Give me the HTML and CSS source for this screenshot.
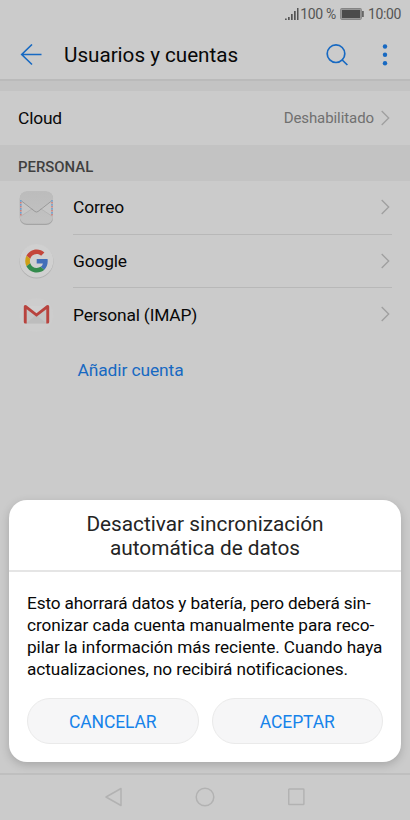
FILE: index.html
```html
<!DOCTYPE html>
<html lang="es">
<head>
<meta charset="utf-8">
<title>Usuarios y cuentas</title>
<link rel="stylesheet" href="styles.css">
</head>
<body>
<div class="screen">
  <div class="status">
    <svg class="signal" width="14" height="13" viewBox="0 0 14 13" fill="#555"><path d="M0 10.5h1.7V12H0zM3 9h1.7v3H3zM6 6h1.7v6H6zM9 3h1.7v9H9zM12 0h1.5v12H12z"/></svg>
    <span class="percent">100 %</span>
    <svg class="battery" width="24" height="12" viewBox="0 0 24 12"><rect x=".7" y=".7" width="20.6" height="10.6" rx="1.2" fill="none" stroke="#858585" stroke-width="1.2"/><rect x="1.7" y="1.7" width="18.6" height="8.6" fill="#4b4b4b"/><rect x="22" y="3" width="1.8" height="6" fill="#666"/></svg>
    <span class="clock">10:00</span>
  </div>
  <header class="appbar">
    <svg class="back" width="22" height="22" viewBox="0 0 22 22" fill="none" stroke="#1769c2" stroke-width="1.6"><path d="M21.5 10.5H1.8M12 .5L1.7 10.5l10.3 10"/></svg>
    <h1>Usuarios y cuentas</h1>
    <svg class="search" width="22" height="22" viewBox="0 0 22 22" fill="none" stroke="#1769c2" stroke-width="1.7"><circle cx="10" cy="9.7" r="8.8"/><path d="M16.2 16l5.2 5"/></svg>
    <svg class="more" width="6" height="22" viewBox="0 0 6 22" fill="#1769c2"><circle cx="3" cy="2.5" r="2.2"/><circle cx="3" cy="10.8" r="2.2"/><circle cx="3" cy="19.2" r="2.2"/></svg>
  </header>
  <main>
    <div class="row cloud"><span class="label">Cloud</span><span class="state">Deshabilitado</span>
      <svg class="chevron" width="9" height="16" viewBox="0 0 9 16"><path d="M.7 1l7 7-7 7"/></svg></div>
    <h2>PERSONAL</h2>
    <div class="row account">
      <svg class="icon" width="36" height="36" viewBox="0 0 36 36">
        <defs><linearGradient id="mail" x2="0" y2="1"><stop stop-color="#bcbcbc"/><stop offset="1" stop-color="#c2c2c2"/></linearGradient></defs>
        <rect x="1.8" y="1.7" width="33.2" height="33.3" rx="7" fill="#a4a4a4"/><rect x="1.8" y="1.2" width="33.2" height="32.6" rx="7" fill="url(#mail)"/>
        <path d="M2.5 10l12 8.5L2.5 26zM34.5 10l-12 8.5L34.5 26z" fill="#c6c6c6"/>
        <path d="M2.5 26.5l12-8M34.5 26.5l-12-8" fill="none" stroke="#b0b0b0" stroke-width=".7"/>
        <path d="M3.5 11L17 21.5q1.5 1 3 0L33.5 11" fill="none" stroke="#999" stroke-width="1"/>
        <path d="M2.8 10v16M34 10v16" stroke="#6f9fcb" stroke-width="1.6" stroke-dasharray="1.7 2.3"/>
        <path d="M2.8 12v14M34 12v14" stroke="#cc7d7a" stroke-width="1.6" stroke-dasharray="1.4 2.6"/>
      </svg>
      <span class="label">Correo</span><svg class="chevron" width="9" height="16" viewBox="0 0 9 16"><path d="M.7 1l7 7-7 7"/></svg></div>
    <div class="row account">
      <svg class="icon" width="36" height="36" viewBox="0 0 36 36">
        <circle cx="18.5" cy="18.6" r="17" fill="#b2b2b2"/><circle cx="18.5" cy="17.7" r="16.8" fill="#d0d0d0"/>
        <g transform="translate(7.2 6.5) scale(.479)">
          <path fill="#c4463b" d="M24 9.5c3.54 0 6.71 1.22 9.21 3.6l6.85-6.85C35.9 2.38 30.47 0 24 0 14.62 0 6.51 5.38 2.56 13.22l7.98 6.19C12.43 13.72 17.74 9.5 24 9.5z"/>
          <path fill="#426fb9" d="M46.98 24.55c0-1.57-.15-3.09-.38-4.55H24v9.02h12.94c-.58 2.96-2.26 5.48-4.78 7.18l7.73 6c4.51-4.18 7.09-10.36 7.09-17.65z"/>
          <path fill="#cfa017" d="M10.53 28.59A14.5 14.5 0 0 1 9.77 24c0-1.6.27-3.14.76-4.59l-7.98-6.19A24 24 0 0 0 0 24c0 3.88.92 7.54 2.56 10.78l7.97-6.19z"/>
          <path fill="#338b4c" d="M24 48c6.48 0 11.93-2.13 15.89-5.81l-7.73-6c-2.15 1.45-4.92 2.3-8.16 2.3-6.26 0-11.57-4.22-13.47-9.91l-7.98 6.19C6.51 42.62 14.62 48 24 48z"/>
        </g>
      </svg>
      <span class="label">Google</span><svg class="chevron" width="9" height="16" viewBox="0 0 9 16"><path d="M.7 1l7 7-7 7"/></svg></div>
    <div class="row account last">
      <svg class="icon" width="36" height="36" viewBox="0 0 36 36">
        <circle cx="18.5" cy="18" r="17" fill="#cdcdcd"/><rect x="7" y="9" width="23" height="17.5" fill="#c5c5c5"/>
        <path d="M8 26.5l10-8.5 11 8.5z" fill="#bdbdbd"/><path d="M8 9h20l-9.5 8z" fill="#d0d0d0"/>
        <path d="M5.8 9.5Q6 7.2 8.3 8.3l10.2 8L28.7 8.3q2.3-1.1 2.5 1.2v15.5q0 1.6-1.5 1.6h-1.4V12.2l-9.8 7.6-9.8-7.6v14.4H7.3q-1.5 0-1.5-1.6z" fill="#b8433e"/>
      </svg>
      <span class="label">Personal (IMAP)</span><svg class="chevron" width="9" height="16" viewBox="0 0 9 16"><path d="M.7 1l7 7-7 7"/></svg></div>
    <div class="add"><span>Añadir cuenta</span></div>
  </main>
  <nav>
    <svg width="18" height="20" viewBox="0 0 18 20"><path d="M17 1.5v17L2 10z"/></svg>
    <svg width="20" height="20" viewBox="0 0 20 20"><circle cx="10" cy="10" r="8.8"/></svg>
    <svg width="18" height="18" viewBox="0 0 18 18"><rect x=".7" y="1" width="15.2" height="15.6" rx=".7"/></svg>
  </nav>
  <section class="dialog">
    <h3>Desactivar sincronización<br>automática de datos</h3>
    <p><span class="tight">Esto ahorrará datos y batería, pero deberá sin-</span><br>cronizar cada cuenta manualmente para reco-<br>pilar la información más reciente. Cuando haya<br>actualizaciones, no recibirá notificaciones.</p>
    <div class="actions"><button>CANCELAR</button><button>ACEPTAR</button></div>
  </section>
</div>
</body>
</html>
```
FILE: styles.css
```css
* { box-sizing: border-box; }
body { margin: 0; font-family: Roboto, "Liberation Sans", sans-serif; color: #080808; }
h1, h2, h3, p { margin: 0; font-weight: 400; }
svg { display: block; flex: none; }
.screen { position: relative; width: 410px; height: 820px; background: #cbcbcb; overflow: hidden; display: flex; flex-direction: column; }
.status { height: 28px; display: flex; align-items: center; justify-content: flex-end; padding-right: 9px; color: #555; font-size: 14px; letter-spacing: -.35px; white-space: nowrap; }
.signal { margin-right: 1px; }
.percent { margin-right: 4px; }
.battery { margin-right: 4px; }
.appbar { height: 53px; display: flex; align-items: center; padding: 0 22px 0 20px; border-bottom: 2px solid #bababa; }
.back { margin-top: 2px; }
h1 { flex: 1; margin: 3px 0 0 22px; font-size: 20.7px; letter-spacing: -.03px; line-height: 24px; white-space: nowrap; }
.search { margin: 3px 34px 0 0; }
.more { margin-top: 3px; }
main { flex: 1; border-top: 10px solid #c3c3c3; }
.row { display: flex; align-items: center; padding-right: 20px; }
.cloud { height: 54px; padding-left: 18px; }
.label { flex: 1; font-size: 17.4px; letter-spacing: -.18px; line-height: 20px; padding-bottom: 1px; }
.last .label { padding-bottom: 0; }
.state { font-size: 15px; letter-spacing: -.08px; padding-bottom: 1px; color: #707070; margin-right: 7px; }
.chevron { fill: none; stroke: #9f9f9f; stroke-width: 1.3; margin-bottom: 1px; }
h2 { height: 36px; background: #c3c3c3; padding: 12px 18px 0; font-size: 14.9px; line-height: 20px; font-weight: 500; color: #404040; }
.account { position: relative; height: 53.5px; padding-left: 18px; }
.icon { margin-right: 19px; }
.account:not(.last)::after { content: ""; position: absolute; left: 73px; right: 18px; bottom: 0; height: 1px; background: #b8b8b8; }
.add { padding: 18px 0 0 77.5px; font-size: 17.4px; letter-spacing: -.1px; line-height: 20px; color: #1769c2; }
nav { height: 47px; border-top: 2px solid #bfbfbf; padding-bottom: 2px; display: flex; align-items: center; justify-content: center; gap: 73px; }
nav svg { fill: none; stroke: #b2b2b2; stroke-width: 1.5; stroke-linejoin: round; }
.dialog { position: absolute; left: 9px; top: 500px; width: 392px; height: 262px; border-radius: 18px; background: #fff; box-shadow: 0 3px 10px rgba(0,0,0,.18); }
h3 { height: 72px; padding-top: 12px; border-bottom: 2px solid #e5e5e5; text-align: center; font-size: 20.8px; line-height: 24px; color: #242424; white-space: nowrap; }
p { padding: 20px 0 0 18px; font-size: 17.2px; letter-spacing: -.07px; line-height: 22px; white-space: nowrap; }
.tight { letter-spacing: -.13px; }
.actions { display: flex; gap: 13px; padding: 18px 18px 0; }
button { flex: 1; height: 46px; padding: 1px 0 0; border: 1px solid #eaeaea; border-radius: 23px; background: #f6f6f7; color: #1683ea; font: 17.5px Roboto, "Liberation Sans", sans-serif; letter-spacing: -.13px; }
```
